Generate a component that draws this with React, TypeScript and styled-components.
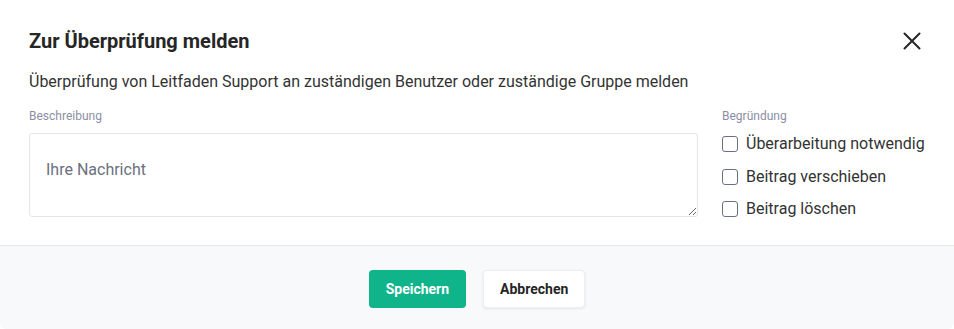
import React from 'react';
import styled, { createGlobalStyle } from 'styled-components';

const GlobalStyle = createGlobalStyle`
  *, *::before, *::after {
    box-sizing: border-box;
  }
  html, body {
    margin: 0;
    padding: 0;
    background: #ffffff;
  }
  body {
    font-family: Roboto, "Liberation Sans", sans-serif;
    color: #212529;
  }
`;

const Modal = styled.div`
  width: 954px;
  height: 329px;
  display: flex;
  flex-direction: column;
  background: #ffffff;
  border-radius: 6px;
  overflow: hidden;
`;

const Body = styled.div`
  flex: 1;
  padding: 28px 29px 0 29px;
  border-bottom: 1px solid #e5e7eb;
`;

const Header = styled.div`
  display: flex;
  justify-content: space-between;
  align-items: center;
  height: 26px;
`;

const Title = styled.h2`
  margin: 0;
  font-size: 20px;
  font-weight: 700;
  color: #262626;
`;

const CloseButton = styled.button`
  border: 0;
  background: none;
  padding: 0;
  width: 20px;
  height: 20px;
  margin-right: 3px;
  display: flex;
  align-items: center;
  justify-content: center;
  cursor: pointer;
  color: #262626;
`;

const Intro = styled.p`
  margin: 16px 0 0 0;
  font-size: 16px;
  color: #333333;
  line-height: 24px;
`;

const Grid = styled.div`
  display: grid;
  grid-template-columns: 669px 1fr;
  column-gap: 24px;
  margin-top: 14px;
`;

const Field = styled.div`
  display: flex;
  flex-direction: column;
`;

const Label = styled.label`
  font-size: 12px;
  color: #8b8fa3;
  line-height: 16px;
  margin-bottom: 9px;
`;

const TextArea = styled.textarea`
  height: 84px;
  border: 1px solid #e4e6eb;
  border-radius: 3px;
  padding: 26px 16px;
  font-family: inherit;
  font-size: 16px;
  line-height: 20px;
  resize: vertical;
  outline: none;
  &::placeholder {
    color: #6b7080;
  }
`;

const CheckList = styled.div`
  display: flex;
  flex-direction: column;
  gap: 8.5px;
  margin-top: -1px;
`;

const CheckRow = styled.label`
  display: flex;
  align-items: center;
  gap: 8px;
  font-size: 16px;
  color: #333333;
  line-height: 24px;
`;

const Box = styled.input`
  appearance: none;
  margin: 0;
  width: 16px;
  height: 16px;
  border: 1px solid #6b7080;
  border-radius: 3px;
  background: #fff;
`;

const Footer = styled.div`
  height: 83px;
  flex-shrink: 0;
  background: #f8f9fb;
  display: flex;
  align-items: center;
  justify-content: center;
  gap: 17px;
  padding-top: 3px;
`;

const Button = styled.button<{ $primary?: boolean }>`
  height: 38px;
  padding: 0 ${p => (p.$primary ? '17px' : '16px')};
  border-radius: 4px;
  font-family: inherit;
  font-size: 14px;
  font-weight: 700;
  cursor: pointer;
  border: ${p => (p.$primary ? '0' : '1px solid #eceef1')};
  background: ${p => (p.$primary ? '#0fb48b' : '#ffffff')};
  color: ${p => (p.$primary ? '#ffffff' : '#262626')};
  box-shadow: ${p => (p.$primary ? 'none' : '0 1px 3px rgba(0,0,0,0.08)')};
`;

const reasons = ['Überarbeitung notwendig', 'Beitrag verschieben', 'Beitrag löschen'];

export default function App() {
  return (
    <>
      <GlobalStyle />
      <Modal>
        <Body>
          <Header>
            <Title>Zur Überprüfung melden</Title>
            <CloseButton aria-label="Schließen">
              <svg width="18" height="18" viewBox="0 0 18 18">
                <path d="M1.5 1.5 L16.5 16.5 M16.5 1.5 L1.5 16.5" stroke="currentColor" strokeWidth="2" strokeLinecap="round" />
              </svg>
            </CloseButton>
          </Header>
          <Intro>Überprüfung von Leitfaden Support an zuständigen Benutzer oder zuständige Gruppe melden</Intro>
          <Grid>
            <Field>
              <Label>Beschreibung</Label>
              <TextArea placeholder="Ihre Nachricht" />
            </Field>
            <Field>
              <Label>Begründung</Label>
              <CheckList>
                {reasons.map(r => (
                  <CheckRow key={r}>
                    <Box type="checkbox" />
                    {r}
                  </CheckRow>
                ))}
              </CheckList>
            </Field>
          </Grid>
        </Body>
        <Footer>
          <Button $primary>Speichern</Button>
          <Button>Abbrechen</Button>
        </Footer>
      </Modal>
    </>
  );
}
